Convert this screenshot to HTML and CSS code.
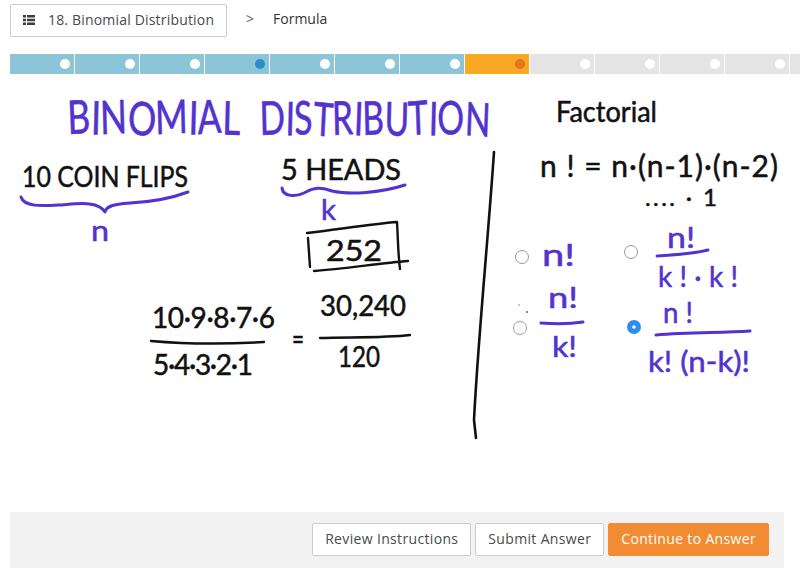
FILE: index.html
```html
<!DOCTYPE html>
<html>
<head>
    <title>Binomial Distribution - Formula</title>
    <link rel="stylesheet" href="styles.css">
</head>
<body>
    <header class="crumbs">
        <button class="lesson-btn">
            <svg class="list-icon" width="12" height="10" viewBox="0 0 12 10">
                <path d="M0 0h3v2.4H0zM4 0h8v2.4H4zM0 3.7h3v2.6H0zM4 3.7h8v2.6H4zM0 7.6h3V10H0zM4 7.6h8V10H4z"/>
            </svg>
            18. Binomial Distribution
        </button>
        <span class="crumb-sep">&gt;</span>
        <span class="crumb-current">Formula</span>
    </header>

    <div class="progress">
        <div class="seg done"></div>
        <div class="seg done"></div>
        <div class="seg done"></div>
        <div class="seg done viewing"></div>
        <div class="seg done"></div>
        <div class="seg done"></div>
        <div class="seg done"></div>
        <div class="seg current"></div>
        <div class="seg"></div>
        <div class="seg"></div>
        <div class="seg"></div>
        <div class="seg"></div>
        <div class="seg"></div>
    </div>

    <svg class="board" width="774" height="438" viewBox="10 74 774 438">
        <!-- title, stretched up because the handwriting is tall -->
        <g transform="scale(1 1.22)">
            <text class="ink-p title" x="68" y="110" textLength="172" lengthAdjust="spacingAndGlyphs" rotate="-3 2 -2 3 -2 2 -3 2">BINOMIAL</text>
            <text class="ink-p title" x="260" y="110.6" textLength="230" lengthAdjust="spacingAndGlyphs" rotate="-2 2 -3 4 -2 3 -2 2 -3 2 -2 3">DISTRIBUTION</text>
        </g>

        <!-- left side -->
        <text class="ink-k hand" x="22" y="187" textLength="166" lengthAdjust="spacingAndGlyphs">10 COIN FLIPS</text>
        <path class="line-p" d="M21 197C24 207 42 206 58 205C76 204 98 200 105 212C106 207 112 204 130 203C150 202 172 198 188 192"/>
        <text class="ink-p hand" x="91" y="241" textLength="18" lengthAdjust="spacingAndGlyphs">n</text>

        <text class="ink-k hand" x="281" y="180" textLength="120" lengthAdjust="spacingAndGlyphs">5 HEADS</text>
        <path class="line-p" d="M282 188C283 197 296 197 304 193C314 187 322 187 332 191C350 195 380 193 405 185"/>
        <text class="ink-p hand" x="321" y="220" textLength="15" lengthAdjust="spacingAndGlyphs">k</text>

        <text class="ink-k hand" x="326" y="261" textLength="56" lengthAdjust="spacingAndGlyphs">252</text>
        <path class="line-k" d="M307 233C335 230 370 224 397 222C398 238 398 254 400 269M308 238L310 267M314 271C345 269 380 263 408 261"/>

        <text class="ink-k hand" x="152" y="328" textLength="123" lengthAdjust="spacing">10·9·8·7·6</text>
        <path class="line-k" d="M151 341C185 344 230 344 264 342"/>
        <text class="ink-k hand" x="153" y="375" textLength="100" lengthAdjust="spacing">5·4·3·2·1</text>
        <text class="ink-k hand" x="292" y="349" textLength="12" lengthAdjust="spacingAndGlyphs">=</text>
        <text class="ink-k hand" x="320" y="316" textLength="86" lengthAdjust="spacingAndGlyphs">30,240</text>
        <path class="line-k" d="M320 338C350 337 385 338 410 335"/>
        <text class="ink-k hand" x="338" y="367" textLength="42" lengthAdjust="spacingAndGlyphs">120</text>

        <path class="divider" d="M494 152C488 240 478 340 474 420L476 438"/>

        <!-- factorial -->
        <text class="ink-k hand" x="556" y="122" textLength="101" lengthAdjust="spacingAndGlyphs">Factorial</text>
        <text class="ink-k big" x="540" y="177" textLength="238" lengthAdjust="spacing">n ! = n·(n-1)·(n-2)</text>
        <text class="ink-k hand-s" x="645" y="206" textLength="72" lengthAdjust="spacing">.... · 1</text>

        <!-- answer choices -->
        <circle class="radio" cx="522" cy="257" r="6.5"/>
        <text class="ink-p big" x="542" y="266" textLength="33" lengthAdjust="spacingAndGlyphs">n!</text>

        <circle class="radio" cx="631" cy="252" r="6.5"/>
        <text class="ink-p hand" x="667" y="248" textLength="28" lengthAdjust="spacingAndGlyphs">n!</text>
        <path class="line-p" d="M657 256C675 255 692 254 708 250"/>
        <text class="ink-p hand" x="658" y="287" textLength="80" lengthAdjust="spacing">k!·k!</text>

        <circle class="speck" cx="519" cy="305" r=".7"/>
        <circle class="speck" cx="527" cy="312" r="1"/>
        <circle class="radio" cx="520" cy="328" r="6.5"/>
        <text class="ink-p hand" x="548" y="308" textLength="30" lengthAdjust="spacingAndGlyphs">n!</text>
        <path class="line-p" d="M541 323C555 324 570 324 583 322"/>
        <text class="ink-p hand" x="552" y="357" textLength="25" lengthAdjust="spacingAndGlyphs">k!</text>

        <circle class="radio-on" cx="634" cy="327" r="7"/>
        <circle class="radio-dot" cx="634" cy="327" r="1.8"/>
        <text class="ink-p hand" x="663" y="323" textLength="30" lengthAdjust="spacingAndGlyphs">n !</text>
        <path class="line-p" d="M656 335C690 332 720 333 750 331"/>
        <text class="ink-p hand" x="648" y="372" textLength="102" lengthAdjust="spacingAndGlyphs">k! (n-k)!</text>
    </svg>

    <footer class="actions">
        <button class="btn">Review Instructions</button>
        <button class="btn">Submit Answer</button>
        <button class="btn btn-primary">Continue to Answer</button>
    </footer>
</body>
</html>
```

FILE: styles.css
```css
html, body {
    height: 100%;
}

body {
    margin: 0;
    background-color: #fff;
    font-family: "Open Sans", Arial, sans-serif;
    overflow: hidden;
}

.crumbs {
    display: flex;
    align-items: center;
    padding: 4px 0 0 10px;
    height: 33px;
    color: #444;
    font-size: 14px;
}

.lesson-btn {
    display: flex;
    align-items: center;
    width: 217px;
    height: 33px;
    padding: 0 0 2px 12px;
    background-color: #fff;
    border: 1px solid #ccc;
    border-radius: 2px;
    color: #4a4a4a;
    font: inherit;
    letter-spacing: .18px;
}

.list-icon {
    margin-right: 13px;
    fill: #3c3c3c;
}

.crumb-sep {
    margin: -5px 19px 0 19px;
    color: #666;
}

.crumb-current {
    margin-top: -5px;
    color: #333;
}

.progress {
    display: flex;
    gap: 1px;
    margin: 17px 0 0 10px;
    height: 20px;
    overflow: hidden;
}

.seg {
    position: relative;
    flex: 0 0 64px;
    background-color: #e4e4e4;
}

.seg::after {
    content: "";
    position: absolute;
    top: 5px;
    right: 4.5px;
    width: 10px;
    height: 10px;
    border-radius: 50%;
    background-color: #fff;
}

.seg.done {
    background-color: #8cc4d8;
}

.seg.current {
    background-color: #f8a823;
}

.seg.viewing::after {
    background-color: #2a8fc4;
}

.seg.current::after {
    background-color: #e8731f;
}

.board {
    display: block;
    margin-left: 10px;
}

.ink-p {
    fill: #5233cf;
    stroke: #5233cf;
    stroke-width: .5;
}

.ink-k {
    fill: #111;
    stroke: #111;
    stroke-width: .5;
}

.title,
.hand,
.hand-s,
.big {
    font-family: Lato, Arial, sans-serif;
}

.title {
    font-size: 38px;
}

.hand {
    font-size: 28px;
}

.hand-s {
    font-size: 24px;
}

.big {
    font-size: 30px;
}

.line-p,
.line-k,
.divider {
    fill: none;
    stroke-linecap: round;
    stroke-linejoin: round;
}

.line-p {
    stroke: #5233cf;
    stroke-width: 3;
}

.line-k {
    stroke: #111;
    stroke-width: 2.4;
}

.divider {
    stroke: #111;
    stroke-width: 2.6;
}

.radio {
    fill: #fff;
    stroke: #999;
    stroke-width: 1;
}

.radio-on {
    fill: #2f8cf0;
}

.radio-dot {
    fill: #fff;
}

.speck {
    fill: #5a5a8a;
}

.actions {
    display: flex;
    justify-content: flex-end;
    align-items: flex-start;
    gap: 4px;
    margin-left: 10px;
    width: 759px;
    height: 45px;
    padding: 11px 15px 0 0;
    background-color: #f2f2f2;
}

.btn {
    height: 33px;
    padding: 0 12px 2px 12px;
    background-color: #fff;
    border: 1px solid #ccc;
    border-radius: 2px;
    color: #4a4a4a;
    font-family: "Open Sans", Arial, sans-serif;
    font-size: 14px;
    letter-spacing: .34px;
}

.btn-primary {
    background-color: #f18c33;
    border-color: #f18c33;
    color: #fff;
}
```
